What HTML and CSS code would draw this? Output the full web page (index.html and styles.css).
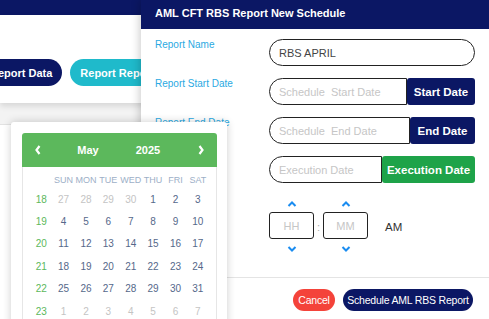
FILE: index.html
```html
<!DOCTYPE html>
<html lang="en">
<head>
  <meta charset="UTF-8" />
  <meta name="viewport" content="width=device-width, initial-scale=1.0"/>
  <title>AML CFT RBS Report New Schedule</title>
  <link rel="stylesheet" href="styles.css">
</head>
<body>
<div class="topbar"></div>
<div class="card actions">
  <div class="pill-row">
    <button class="pill pill-navy">Report Data</button>
    <button class="pill pill-teal">Report Reports</button>
  </div>
</div>
<div class="card lower"></div>

<div class="modal">
  <div class="modal-head">AML CFT RBS Report New Schedule</div>
  <div class="modal-body">
    <div class="row">
      <label class="lbl">Report Name</label>
      <input class="field field-round" type="text" value="RBS APRIL" />
    </div>
    <div class="row">
      <label class="lbl">Report Start Date</label>
      <div class="group">
        <input class="field field-left" type="text" placeholder="Schedule  Start Date" />
        <button class="gbtn navy w-start">Start Date</button>
      </div>
    </div>
    <div class="row">
      <label class="lbl">Report End Date</label>
      <div class="group">
        <input class="field field-left" type="text" placeholder="Schedule  End Date" />
        <button class="gbtn navy w-end">End Date</button>
      </div>
    </div>
    <div class="row">
      <label class="lbl">Execution Date</label>
      <div class="group">
        <input class="field field-left" type="text" placeholder="Execution Date" />
        <button class="gbtn green w-exec">Execution Date</button>
      </div>
    </div>
    <div class="row row-time">
      <label class="lbl">Execution Time</label>
      <div class="time">
        <div class="spin">
          <svg class="chev" viewBox="0 0 10 6"><polyline points="1.5,5 5,1.5 8.5,5"/></svg>
          <input class="tbox" type="text" placeholder="HH" />
          <svg class="chev" viewBox="0 0 10 6"><polyline points="1.5,1 5,4.5 8.5,1"/></svg>
        </div>
        <span class="colon">:</span>
        <div class="spin">
          <svg class="chev" viewBox="0 0 10 6"><polyline points="1.5,5 5,1.5 8.5,5"/></svg>
          <input class="tbox" type="text" placeholder="MM" />
          <svg class="chev" viewBox="0 0 10 6"><polyline points="1.5,1 5,4.5 8.5,1"/></svg>
        </div>
        <span class="ampm">AM</span>
      </div>
    </div>
  </div>
  <div class="modal-foot">
    <button class="fbtn red">Cancel</button>
    <button class="fbtn navy">Schedule AML RBS Report</button>
  </div>
</div>

<div class="picker">
  <div class="picker-head">
    <svg class="nav" viewBox="0 0 6 10"><polyline points="4.5,1 1.5,5 4.5,9"/></svg>
    <span class="month">May</span>
    <span class="year">2025</span>
    <span></span>
    <svg class="nav" viewBox="0 0 6 10"><polyline points="1.5,1 4.5,5 1.5,9"/></svg>
  </div>
  <div class="picker-body">
    <table id="cal"></table>
  </div>
</div>

<script>
// semanas de mayo 2025
const semanas = [
  [18, ['27','28','29','30',1,2,3]],
  [19, [4,5,6,7,8,9,10]],
  [20, [11,12,13,14,15,16,17]],
  [21, [18,19,20,21,22,23,24]],
  [22, [25,26,27,28,29,30,31]],
  [23, ['1','2','3','4','5','6','7']]
];

let html = "<tr class='names'><th></th><th>SUN</th><th>MON</th><th>TUE</th><th>WED</th><th>THU</th><th>FRI</th><th>SAT</th></tr>";
semanas.forEach(s => {
  html += `<tr><td class="wk">${s[0]}</td>`;
  s[1].forEach(d => {
    const fuera = typeof d === 'string';
    html += `<td class="${fuera ? 'off' : ''}">${d}</td>`;
  });
  html += "</tr>";
});
document.getElementById('cal').innerHTML = html;
</script>
</body>
</html>
```

FILE: styles.css
```css
body {
  margin: 0;
  font-family: "Liberation Sans", Arial, sans-serif;
  background-color: #f3f3f3;
  overflow: hidden;
  height: 319px;
}
button, input {
  font-family: "Liberation Sans", Arial, sans-serif;
}
.topbar {
  height: 15px;
  background: #0b1764;
}
.card {
  background: white;
}
.actions {
  height: 88px;
  box-shadow: 0 3px 6px rgba(0,0,0,0.12);
  position: relative;
}
.pill-row {
  display: flex;
  gap: 8px;
  padding-top: 44px;
  margin-left: -20px;
}
.pill {
  height: 27px;
  border: none;
  border-radius: 14px;
  padding: 0 10px;
  color: white;
  font-weight: bold;
  font-size: 11px;
  white-space: nowrap;
}
.pill-navy { background: #0b1764; }
.pill-teal { background: #1fbacb; padding-right: 30px; }
.lower {
  margin-top: 21px;
  height: 200px;
  border-top: 1px solid #e2e2e2;
}

/* modal */
.modal {
  position: absolute;
  top: 0;
  left: 141px;
  width: 348px;
  height: 330px;
  background: white;
  box-shadow: -2px 0 8px rgba(0,0,0,0.18);
}
.modal-head {
  height: 29px;
  box-sizing: border-box;
  padding: 7px 14px 0;
  background: #0b1764;
  color: white;
  font-weight: bold;
  font-size: 11px;
}
.modal-body {
  padding: 10px 14px 23px;
  display: flex;
  flex-direction: column;
  gap: 12px;
}
.row {
  display: grid;
  grid-template-columns: 114px 206px;
  align-items: start;
}
.lbl {
  font-size: 10px;
  line-height: 12px;
  color: #2aa9e2;
}
.field {
  height: 27px;
  box-sizing: border-box;
  border: 1px solid #222;
  padding: 0 9px;
  font-size: 11px;
  color: #444;
  outline: none;
  min-width: 0;
}
.field::placeholder { color: #c6c6c6; }
.field-round { border-radius: 14px; width: 206px; }
.field-left { border-radius: 14px 0 0 14px; flex: 1; }
.group {
  display: flex;
  height: 27px;
}
.gbtn {
  border: none;
  border-radius: 3px;
  color: white;
  font-weight: bold;
  font-size: 11.5px;
  padding: 0;
  white-space: nowrap;
}
.navy { background: #0b1764; }
.green { background: #1ea349; }
.w-start { width: 68px; }
.w-end { width: 65px; }
.w-exec { width: 93px; }

.row-time { margin-top: 4px; }
.time {
  display: flex;
  align-items: center;
}
.spin {
  display: flex;
  flex-direction: column;
  align-items: center;
  width: 45px;
}
.chev {
  width: 10px;
  height: 6px;
  fill: none;
  stroke: #1a8cf0;
  stroke-width: 2;
  margin: 2px 0;
}
.spin .chev:first-child { margin-bottom: 5px; }
.spin .chev:last-child { margin-top: 7px; }
.tbox {
  width: 45px;
  height: 27px;
  box-sizing: border-box;
  border: 1px solid #222;
  border-radius: 3px;
  text-align: center;
  font-size: 11px;
  outline: none;
}
.tbox::placeholder { color: #c6c6c6; }
.colon {
  width: 9px;
  text-align: center;
  color: #aaa;
  font-size: 11px;
}
.ampm {
  margin-left: 17px;
  font-size: 11.5px;
  color: #333;
}
.modal-foot {
  border-top: 1px solid #e4e4e4;
  display: flex;
  justify-content: flex-end;
  gap: 8px;
  padding: 11px 16px 0;
}
.fbtn {
  height: 22px;
  border: none;
  border-radius: 11px;
  color: white;
  font-size: 10.5px;
  letter-spacing: -0.2px;
  padding: 0;
  white-space: nowrap;
}
.red { background: #f4433a; width: 42px; }
.fbtn.navy { width: 130px; }

/* date picker */
.picker {
  position: absolute;
  top: 122px;
  left: 11px;
  width: 216px;
  height: 210px;
  box-sizing: border-box;
  padding: 11px 10px 0 11px;
  background: white;
  border-radius: 3px;
  box-shadow: 0 0 8px rgba(0,0,0,0.2);
}
.picker-head {
  height: 34px;
  background: #5cb85c;
  border-radius: 3px 3px 0 0;
  display: grid;
  grid-template-columns: 32px 68px 52px 1fr 32px;
  align-items: center;
  color: white;
  font-weight: bold;
  font-size: 11px;
}
.picker-head span { text-align: center; }
.nav {
  width: 6px;
  height: 10px;
  justify-self: center;
  fill: none;
  stroke: white;
  stroke-width: 2.2;
}
.picker-body {
  border: 1px solid #e6e6e6;
  border-top: none;
  padding: 4px 7px 0;
}
table {
  width: 179px;
  border-collapse: collapse;
  table-layout: fixed;
}
th, td {
  padding: 0;
  text-align: center;
  font-size: 10px;
}
.names th {
  height: 17px;
  font-weight: normal;
  font-size: 9px;
  color: #9dafc7;
}
td {
  height: 22.4px;
  color: #55688a;
}
td.wk { color: #5cb85c; }
td.off { color: #c4c4c4; }
```
